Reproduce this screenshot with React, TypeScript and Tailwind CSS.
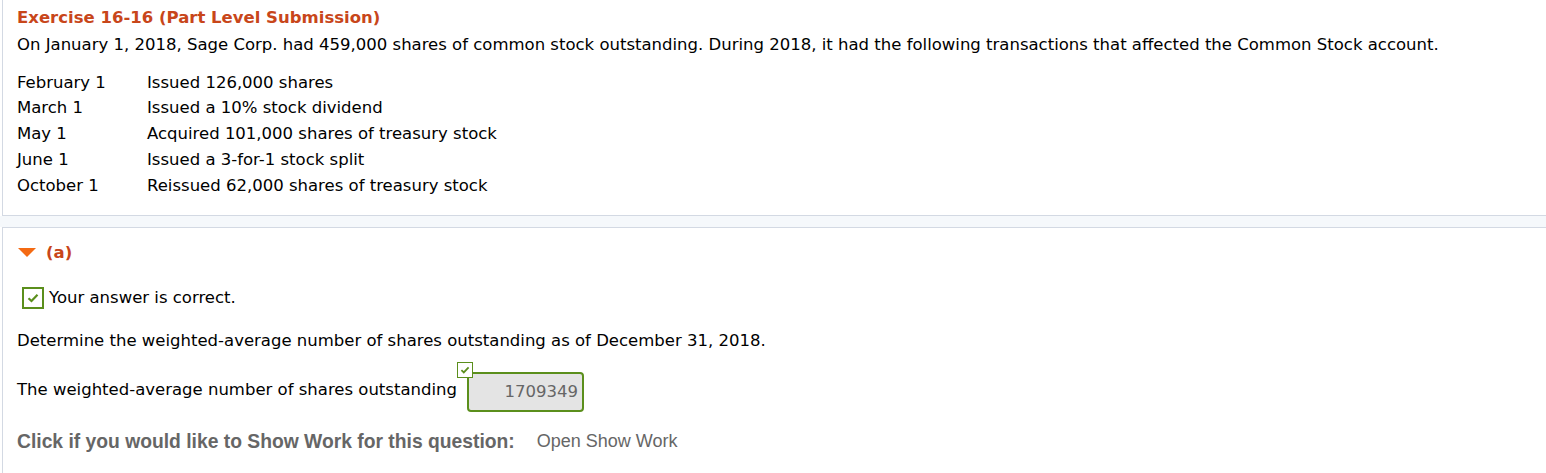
const rows = [
  ["February 1", "Issued 126,000 shares"],
  ["March 1", "Issued a 10% stock dividend"],
  ["May 1", "Acquired 101,000 shares of treasury stock"],
  ["June 1", "Issued a 3-for-1 stock split"],
  ["October 1", "Reissued 62,000 shares of treasury stock"],
]

const Check = ({ className }: { className: string }) => (
  <svg viewBox="0 0 12 10" className={className} fill="none">
    <path d="M1.5 5.2 L4.5 8 L10.5 1.8" stroke="#5b8f1c" strokeWidth="2.2" />
  </svg>
)

const App = () => {
  return (
    <div className="min-h-[473px] bg-white font-['DejaVu_Sans',sans-serif] text-[16.5px] text-black">
      <div className="ml-[2px] border-b border-l border-[#d3d9e3] pl-[14px] pt-[6px] pb-[16px]">
        <h1 className="h-[24px] text-[16.5px] font-bold leading-[24px] text-[#c8461a]">Exercise 16-16 (Part Level Submission)</h1>
        <p className="mt-[1px] h-[28px] leading-[28px] whitespace-nowrap">
          On January 1, 2018, Sage Corp. had 459,000 shares of common stock outstanding. During 2018, it had the following transactions that affected the Common Stock account.
        </p>
        <div className="mt-[11px] flex flex-col">
          {rows.map(([d, t]) => (
            <div key={d} className="flex h-[25.8px] items-center">
              <span className="w-[130px]">{d}</span>
              <span>{t}</span>
            </div>
          ))}
        </div>
      </div>
      <div className="h-[11px] bg-[#f5f8fb]" />
      <div className="ml-[2px] border-t border-l border-[#d3d9e3] pl-[14px] pt-[14px] pb-[19px]">
        <div className="flex h-[22px] items-center">
          <svg width="18" height="9" viewBox="0 0 18 9" className="ml-[1px] mr-[10px]">
            <polygon points="0,0 18,0 9,9" fill="#f46a13" />
          </svg>
          <span className="font-bold text-[#c8461a]">(a)</span>
        </div>
        <div className="mt-[23px] flex h-[22px] items-center">
          <div className="ml-[5px] flex h-[22px] w-[22px] items-center justify-center border-2 border-[#5b8f1c]">
            <Check className="h-[10px] w-[12px]" />
          </div>
          <span className="ml-[5px]">Your answer is correct.</span>
        </div>
        <p className="mt-[20px] h-[24px] leading-[24px]">Determine the weighted-average number of shares outstanding as of December 31, 2018.</p>
        <div className="mt-[9px] flex items-start">
          <span className="mt-[16px] w-[440px] whitespace-nowrap leading-[24px]">The weighted-average number of shares outstanding</span>
          <div className="relative pl-[10px] pt-[10px]">
            <div className="absolute left-0 top-0 flex h-[16px] w-[16px] items-center justify-center border-[1.5px] border-[#5b8f1c] bg-white">
              <Check className="h-[8px] w-[10px]" />
            </div>
            <div className="flex h-[40px] w-[117px] items-center justify-end rounded-[4px] border-2 border-[#5b8f1c] bg-[#e4e4e4] pr-[4px] pt-[1px] text-[#666]">
              1709349
            </div>
          </div>
        </div>
        <div className="mt-[18px] flex h-[24px] items-center font-['Liberation_Sans',sans-serif]">
          <span className="text-[19.3px] font-bold text-[#666]">Click if you would like to Show Work for this question:</span>
          <span className="ml-[22px] text-[18px] text-[#666]">Open Show Work</span>
        </div>
      </div>
    </div>
  )
}

export default App
